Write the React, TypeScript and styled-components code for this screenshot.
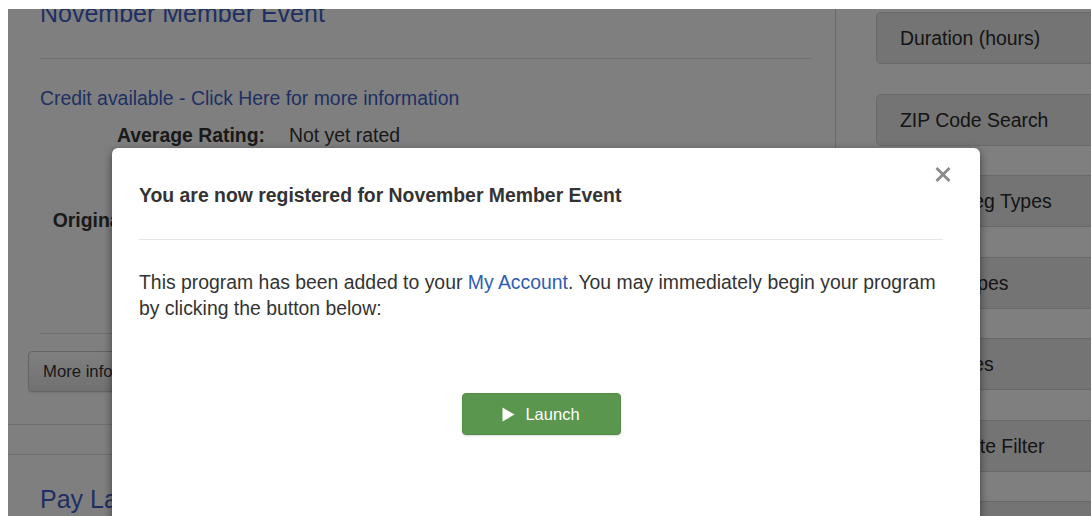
import React from "react";
import styled, { createGlobalStyle } from "styled-components";

const GlobalStyle = createGlobalStyle`
	html, body {
		margin: 0;
		background: #fff;
	}

	body {
		font-family: "Liberation Sans", Arial, sans-serif;
	}

	#root {
		padding: 9px 0 0 8px;
	}
`;

interface Detail {
	label: string;
	value: string;
}

const details: Detail[] = [
	{ label: "Average Rating:", value: "Not yet rated" },
	{ label: "Original Program Date:", value: "November 14" },
];

const filters = [
	"Duration (hours)",
	"ZIP Code Search",
	"Select Reg Types",
	"Credit Types",
	"Categories",
	"Event Date Filter",
	"Price Range",
];

const PlayIcon = () => (
	<svg width="13" height="15" viewBox="0 0 13 15" aria-hidden="true">
		<path d="M0.5 0.5 L12.5 7.5 L0.5 14.5 Z" fill="#fff" />
	</svg>
);

const CloseIcon = () => (
	<svg width="16" height="15" viewBox="0 0 16 15" aria-hidden="true">
		<path
			d="M1.5 1 L14.5 14 M14.5 1 L1.5 14"
			stroke="#8a8a8a"
			strokeWidth="2.8"
			strokeLinecap="butt"
		/>
	</svg>
);

const App = () => {
	return (
		<>
			<GlobalStyle />
			<Viewport>
				<Layout>
					<Main>
						<ProgramItem>
							<ProgramTitle>November Member Event</ProgramTitle>
							<Rule />
							<CreditLink>
								Credit available - Click Here for more information
							</CreditLink>
							<Details>
								{details.map((d) => (
									<React.Fragment key={d.label}>
										<DetailLabel>{d.label}</DetailLabel>
										<DetailValue>{d.value}</DetailValue>
									</React.Fragment>
								))}
							</Details>
							<Rule $spaced />
							<MoreInfoButton>More info</MoreInfoButton>
						</ProgramItem>
						<ProgramItem $next>
							<ProgramTitle>Pay Later Program</ProgramTitle>
						</ProgramItem>
					</Main>
					<Sidebar>
						{filters.map((f) => (
							<FilterPanel key={f}>{f}</FilterPanel>
						))}
					</Sidebar>
				</Layout>

				<Backdrop />

				<Dialog role="dialog">
					<DialogHeader>
						<DialogTitle>
							You are now registered for November Member Event
						</DialogTitle>
						<CloseButton aria-label="Close">
							<CloseIcon />
						</CloseButton>
					</DialogHeader>
					<DialogBody>
						<p>
							This program has been added to your{" "}
							<AccountLink href="#">My Account</AccountLink>. You may
							immediately begin your program by clicking the button
							below:
						</p>
						<LaunchRow>
							<LaunchButton>
								<PlayIcon />
								Launch
							</LaunchButton>
						</LaunchRow>
					</DialogBody>
				</Dialog>
			</Viewport>
		</>
	);
};

const Viewport = styled.div`
	position: relative;
	height: 507px;
	overflow: hidden;
	background: #fff;
	color: #333;
	font-size: 19.4px;
	line-height: 26px;
`;

const Layout = styled.div`
	display: flex;
	height: 100%;
`;

const Main = styled.div`
	width: 827px;
	flex-shrink: 0;
	border-right: 1px solid #d4d4d4;
`;

const ProgramItem = styled.section<{ $next?: boolean }>`
	padding: ${(p) => (p.$next ? "29px 23px 0 32px" : "0 23px 32px 32px")};
	border-bottom: ${(p) => (p.$next ? "none" : "1px solid #dedede")};
	border-top: ${(p) => (p.$next ? "1px solid #dedede" : "none")};
	margin-top: ${(p) => (p.$next ? "29px" : "0")};
`;

const ProgramTitle = styled.h2`
	margin: 0;
	font-size: 25px;
	line-height: 30px;
	font-weight: normal;
	color: #3f5fc6;

	section:first-child > & {
		margin-top: -11px;
	}
`;

const Rule = styled.hr<{ $spaced?: boolean }>`
	margin: ${(p) => (p.$spaced ? "100px 0 17px" : "30px 0 0")};
	border: 0;
	border-top: 1px solid #e0e0e0;
`;

const CreditLink = styled.a`
	display: block;
	margin-top: 26px;
	color: #3f5fc6;
	text-decoration: none;
`;

const Details = styled.dl`
	display: grid;
	grid-template-columns: 225px 1fr;
	column-gap: 24px;
	row-gap: 59px;
	margin: 11px 0 0;
`;

const DetailLabel = styled.dt`
	text-align: right;
	font-weight: bold;
	white-space: nowrap;
`;

const DetailValue = styled.dd`
	margin: 0;
`;

const MoreInfoButton = styled.button`
	display: block;
	margin-left: -12px;
	height: 41px;
	padding: 0 14px;
	font-family: inherit;
	font-size: 16.7px;
	color: #333;
	background: linear-gradient(#fff, #e2e2e2);
	border: 1px solid #c8c8c8;
	border-radius: 4px;
	box-shadow: 0 1px 2px rgba(0, 0, 0, 0.1);
`;

const Sidebar = styled.aside`
	flex: 1;
	padding: 3px 0 0 40px;
`;

const FilterPanel = styled.div`
	box-sizing: border-box;
	width: 260px;
	height: 52px;
	margin-bottom: 29.5px;
	padding-left: 23px;
	display: flex;
	align-items: center;
	background: #e8e8e8;
	border: 1px solid #d2d2d2;
	border-radius: 5px;
	white-space: nowrap;
	color: #2a2a2a;
`;

const Backdrop = styled.div`
	position: absolute;
	inset: 0;
	background: rgba(0, 0, 0, 0.5);
`;

const Dialog = styled.div`
	position: absolute;
	left: 104px;
	top: 139px;
	width: 868px;
	height: 420px;
	box-sizing: border-box;
	padding: 0 37px 0 27px;
	background: #fff;
	border-radius: 6px;
	box-shadow: 0 3px 9px rgba(0, 0, 0, 0.5);
`;

const DialogHeader = styled.header`
	position: relative;
	padding: 34px 0 31px;
	border-bottom: 1px solid #e5e5e5;
`;

const DialogTitle = styled.h4`
	margin: 0;
	font-size: 19.4px;
	line-height: 26px;
	font-weight: bold;
	color: #333;
`;

const CloseButton = styled.button`
	position: absolute;
	top: 19px;
	right: -8px;
	padding: 0;
	border: 0;
	background: transparent;
	line-height: 0;
	cursor: pointer;
`;

const DialogBody = styled.div`
	padding-top: 29px;

	p {
		margin: 0;
		color: #333;
	}
`;

const AccountLink = styled.a`
	color: #2f5db3;
	text-decoration: none;
`;

const LaunchRow = styled.div`
	display: flex;
	justify-content: center;
	margin-top: 72px;
`;

const LaunchButton = styled.button`
	display: flex;
	align-items: center;
	justify-content: center;
	gap: 10px;
	width: 159px;
	height: 42px;
	padding: 0;
	font-family: inherit;
	font-size: 16.5px;
	color: #fff;
	background: #5a964e;
	border: 1px solid #538c47;
	border-radius: 4px;
	box-shadow: 0 1px 2px rgba(0, 0, 0, 0.15);
	cursor: pointer;
`;

export default App;
